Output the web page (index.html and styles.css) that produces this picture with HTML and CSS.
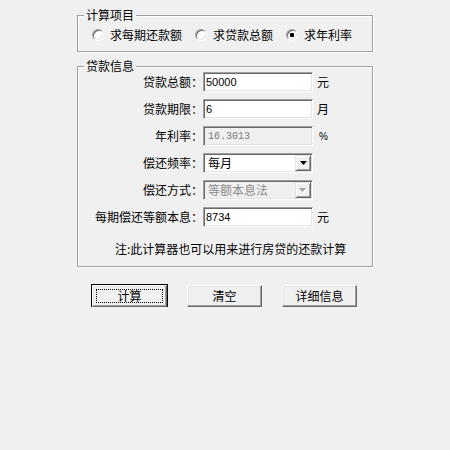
FILE: index.html
```html
<!DOCTYPE html>
<html lang="zh-CN">

<head>
  <meta charset="UTF-8">
  <title>贷款计算器</title>
  <link rel="stylesheet" href="styles.css">
</head>

<body>
  <div class="window">
    <fieldset class="group">
      <legend>计算项目</legend>
      <div class="modes">
        <label class="opt"><span class="radio"></span>求每期还款额</label>
        <label class="opt"><span class="radio"></span>求贷款总额</label>
        <label class="opt"><span class="radio checked"></span>求年利率</label>
      </div>
    </fieldset>

    <fieldset class="group group-info">
      <legend>贷款信息</legend>
      <div class="form">
        <span class="lbl">贷款总额：</span>
        <input class="field" value="50000">
        <span class="unit">元</span>

        <span class="lbl">贷款期限：</span>
        <input class="field" value="6">
        <span class="unit">月</span>

        <span class="lbl">年利率：</span>
        <input class="field field-off" value="16.3013" disabled>
        <span class="unit unit-pct">%</span>

        <span class="lbl">偿还频率：</span>
        <div class="combo">
          <span class="combo__text">每月</span>
          <span class="combo__btn">
            <svg width="7" height="4" viewBox="0 0 7 4"><path d="M0 0 H7 L3.5 4 Z" fill="#000"></path></svg>
          </span>
        </div>
        <span></span>

        <span class="lbl">偿还方式：</span>
        <div class="combo combo-off">
          <span class="combo__text">等额本息法</span>
          <span class="combo__btn">
            <svg width="8" height="5" viewBox="0 0 8 5"><path d="M1 1 H8 L4.5 5 Z" fill="#fff"></path><path d="M0 0 H7 L3.5 4 Z" fill="#a0a0a0"></path></svg>
          </span>
        </div>
        <span></span>

        <span class="lbl">每期偿还等额本息：</span>
        <input class="field" value="8734">
        <span class="unit">元</span>
      </div>
      <p class="note">注:此计算器也可以用来进行房贷的还款计算</p>
    </fieldset>

    <div class="buttons">
      <button class="btn btn-default"><span class="btn__label">计算</span></button>
      <button class="btn"><span class="btn__label">清空</span></button>
      <button class="btn"><span class="btn__label">详细信息</span></button>
    </div>
  </div>
</body>

</html>
```

FILE: styles.css
```css
body {
  background-color: #f0f0f0;
  color: #000;
  font: 12px/14px "Noto Sans CJK SC", sans-serif;
  margin: 0;
}

.window {
  margin-left: 77px;
  padding-top: 9px;
  width: 297px;
}

/* etched group box */
.group {
  border: 1px solid #a0a0a0;
  box-shadow: inset 1px 1px 0 #fff, 1px 1px 0 #fff;
  box-sizing: border-box;
  margin: 0;
  padding: 0;
  width: 296px;
}

.group legend {
  background: #f0f0f0;
  line-height: 12px;
  margin-left: 6px;
  padding: 0 2px;
}

.group-info {
  margin-top: 8px;
}

.modes {
  display: flex;
  padding: 7px 0 9px 14px;
}

.opt {
  align-items: center;
  display: flex;
  gap: 6px;
  margin-right: 13px;
}

.radio {
  background: #fff;
  border: 1px solid;
  border-color: #a0a0a0 #fff #fff #a0a0a0;
  border-radius: 50%;
  box-shadow: inset 1px 1px 0 #696969, inset -1px -1px 0 #e3e3e3;
  box-sizing: border-box;
  height: 12px;
  width: 12px;
}

.radio.checked {
  background: radial-gradient(circle, #000 0, #000 2px, #fff 2.5px);
}

.form {
  align-items: center;
  display: grid;
  grid-template-columns: 125px 110px auto;
  row-gap: 7px;
}

.lbl {
  text-align: right;
}

.unit {
  padding-left: 4px;
}

.unit-pct {
  font: 10px "Liberation Sans", sans-serif;
  padding-left: 6px;
}

/* sunken edit box */
.field,
.combo {
  background: #fff;
  border: 1px solid;
  border-color: #a0a0a0 #fff #fff #a0a0a0;
  box-shadow: inset 1px 1px 0 #696969, inset -1px -1px 0 #e3e3e3;
  box-sizing: border-box;
  height: 20px;
  margin: 0;
  width: 110px;
}

.field {
  color: #000;
  font: 11px "Liberation Sans", sans-serif;
  outline: none;
  padding: 0 2px;
}

.field-off {
  background: #f0f0f0;
  color: #7a7a7a;
  font: 10px "Liberation Mono", monospace;
  padding-left: 4px;
}

.combo {
  align-items: center;
  display: flex;
  justify-content: space-between;
  padding: 1px;
}

.combo__text {
  padding-left: 3px;
}

.combo__btn {
  align-items: center;
  background: #f0f0f0;
  border: 1px solid;
  border-color: #e3e3e3 #696969 #696969 #e3e3e3;
  box-shadow: inset 1px 1px 0 #fff, inset -1px -1px 0 #a0a0a0;
  box-sizing: border-box;
  display: flex;
  height: 16px;
  justify-content: center;
  width: 16px;
}

.combo-off {
  background: #f0f0f0;
  color: #8d8d8d;
}

.note {
  margin: 15px 0 10px 37px;
}

.buttons {
  display: flex;
  gap: 20px;
  margin-top: 18px;
  padding-left: 15px;
}

/* raised push button */
.btn {
  background: #f0f0f0;
  border: 1px solid;
  border-color: #fff #696969 #696969 #fff;
  box-shadow: inset -1px -1px 0 #a0a0a0, inset 1px 1px 0 #e3e3e3;
  box-sizing: border-box;
  color: #000;
  font: 12px/14px "Noto Sans CJK SC", sans-serif;
  height: 22px;
  padding: 0;
  position: relative;
  width: 75px;
}

.btn-default {
  outline: 1px solid #000;
  outline-offset: 0;
}

.btn-default::after {
  border: 1px dotted #000;
  bottom: 3px;
  content: "";
  left: 3px;
  position: absolute;
  right: 3px;
  top: 3px;
}
```
